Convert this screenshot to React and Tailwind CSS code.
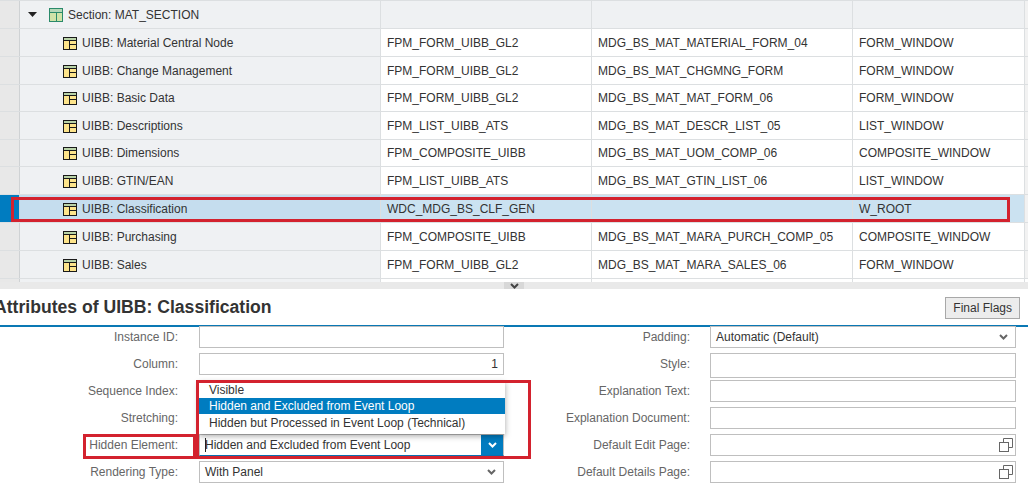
import React from 'react';

const rows = [
  { name: 'UIBB: Material Central Node', comp: 'FPM_FORM_UIBB_GL2', config: 'MDG_BS_MAT_MATERIAL_FORM_04', win: 'FORM_WINDOW', h: 'h-[28px]' },
  { name: 'UIBB: Change Management', comp: 'FPM_FORM_UIBB_GL2', config: 'MDG_BS_MAT_CHGMNG_FORM', win: 'FORM_WINDOW', h: 'h-[28px]' },
  { name: 'UIBB: Basic Data', comp: 'FPM_FORM_UIBB_GL2', config: 'MDG_BS_MAT_MAT_FORM_06', win: 'FORM_WINDOW', h: 'h-[27px]' },
  { name: 'UIBB: Descriptions', comp: 'FPM_LIST_UIBB_ATS', config: 'MDG_BS_MAT_DESCR_LIST_05', win: 'LIST_WINDOW', h: 'h-[28px]' },
  { name: 'UIBB: Dimensions', comp: 'FPM_COMPOSITE_UIBB', config: 'MDG_BS_MAT_UOM_COMP_06', win: 'COMPOSITE_WINDOW', h: 'h-[27px]' },
  { name: 'UIBB: GTIN/EAN', comp: 'FPM_LIST_UIBB_ATS', config: 'MDG_BS_MAT_GTIN_LIST_06', win: 'LIST_WINDOW', h: 'h-[28px]' },
  { name: 'UIBB: Classification', comp: 'WDC_MDG_BS_CLF_GEN', config: '', win: 'W_ROOT', h: 'h-[28px]', selected: true },
  { name: 'UIBB: Purchasing', comp: 'FPM_COMPOSITE_UIBB', config: 'MDG_BS_MAT_MARA_PURCH_COMP_05', win: 'COMPOSITE_WINDOW', h: 'h-[28px]' },
  { name: 'UIBB: Sales', comp: 'FPM_FORM_UIBB_GL2', config: 'MDG_BS_MAT_MARA_SALES_06', win: 'FORM_WINDOW', h: 'h-[28px]' },
];

const UibbIcon = () => (
  <svg width="14" height="14" viewBox="0 0 14 14" className="shrink-0">
    <rect x="0.5" y="1.5" width="13" height="12" fill="#fde48b" stroke="#1a1a1a" />
    <rect x="1" y="2" width="12" height="2" fill="#b9d3a8" />
    <path d="M1 4.5H13M6.5 4.5V13M6.5 8.5H13" stroke="#1a1a1a" fill="none" />
  </svg>
);

const SectionIcon = () => (
  <svg width="14" height="14" viewBox="0 0 14 14" className="shrink-0">
    <rect x="0.5" y="0.5" width="13" height="13" fill="#cfe3a8" stroke="#2a8a6a" />
    <rect x="1" y="1" width="12" height="3" fill="#b5d8b8" />
    <path d="M1 4.5H13M7.5 4.5V13" stroke="#2a8a6a" fill="none" />
  </svg>
);

const Chevron = ({ color = '#666' }) => (
  <svg width="9" height="6" viewBox="0 0 9 6">
    <path d="M1 1L4.5 4.5L8 1" fill="none" stroke={color} strokeWidth="2" />
  </svg>
);

const PopupIcon = () => (
  <svg width="14" height="14" viewBox="0 0 14 14" className="shrink-0">
    <path d="M4.5 4V0.5H13.5V9.5H10" fill="none" stroke="#666" />
    <rect x="0.5" y="4.5" width="9" height="9" fill="none" stroke="#666" />
  </svg>
);

const Row = ({ row }) => {
  const cell = row.selected ? 'bg-[#cbe2f1]' : 'bg-white';
  return (
    <div className={`flex ${row.h} border-b border-[#dcdfe1]`}>
      <div className={`w-[20px] shrink-0 border-r border-[#cfd2d4] ${row.selected ? 'bg-[#007cc0]' : 'bg-[#e8e8e8]'}`} />
      <div className={`w-[361px] shrink-0 flex items-center pl-[43px] gap-[5px] border-r border-[#dcdfe1] ${row.selected ? 'bg-[#c5ddee]' : 'bg-[#eff1f3]'}`}>
        <UibbIcon />
        <span>{row.name}</span>
      </div>
      <div className={`w-[211px] shrink-0 flex items-center pl-[6px] border-r border-[#dcdfe1] ${cell}`}>{row.comp}</div>
      <div className={`w-[261px] shrink-0 flex items-center pl-[6px] border-r border-[#dcdfe1] ${cell}`}>{row.config}</div>
      <div className={`w-[172px] shrink-0 flex items-center pl-[6px] border-r border-[#dcdfe1] ${cell}`}>{row.win}</div>
      <div className="flex-1 bg-[#f2f2f2]" />
    </div>
  );
};

const Field = ({ label, select, active, children }) => (
  <div className="flex items-center mb-[5px]">
    <div className="w-[178px] shrink-0 text-right text-[#666]">{label}</div>
    <div className={`relative ml-[21px] w-[305px] h-[22px] flex items-center justify-between bg-white border pl-[5px] pr-[4px] ${active ? 'border-[#c0c0c0] border-b-[#0a6fb0]' : 'border-[#bfbfbf]'}`}>
      {active && <span className="absolute left-[5px] top-[3px] bottom-[3px] w-px bg-[#222]" />}
      <span>{children}</span>
      {select && !active && <span className="mr-[3px] flex"><Chevron /></span>}
      {active && (
        <span className="absolute right-0 top-0 bottom-0 w-[22px] bg-[#007cc0] flex items-center justify-center"><Chevron color="#fff" /></span>
      )}
    </div>
  </div>
);

const FieldRight = ({ label, tall, select, popup, children }) => (
  <div className={`flex items-center ${tall ? 'mb-[2px]' : 'mb-[5px]'}`}>
    <div className={`w-[178px] shrink-0 text-right text-[#666] ${tall ? 'pb-[4px]' : ''}`}>{label}</div>
    <div className={`ml-[20px] w-[306px] ${tall ? 'h-[25px]' : 'h-[22px]'} flex items-center justify-between bg-white border border-[#bfbfbf] pl-[5px] pr-[2px]`}>
      <span>{children}</span>
      {select && <span className="mr-[5px] flex"><Chevron /></span>}
      {popup && <PopupIcon />}
    </div>
  </div>
);

const App = () => (
  <div className="relative w-[1028px] h-[488px] overflow-hidden bg-white font-['Liberation_Sans',Arial,sans-serif] text-[12px] text-[#333]">
    {/* Structure table */}
    <div className="flex h-[29px] border-t border-t-[#dcdfe1] border-b border-[#dcdfe1]">
      <div className="w-[20px] shrink-0 bg-[#e8e8e8] border-r border-[#cfd2d4]" />
      <div className="w-[361px] shrink-0 flex items-center pl-[8px] bg-[#eff1f3] border-r border-[#dcdfe1]">
        <svg width="9" height="5" viewBox="0 0 9 5" className="mr-[12px]"><path d="M0 0H9L4.5 5Z" fill="#222" /></svg>
        <SectionIcon />
        <span className="ml-[5px]">Section: MAT_SECTION</span>
      </div>
      <div className="w-[211px] shrink-0 bg-[#eff1f3] border-r border-[#dcdfe1]" />
      <div className="w-[261px] shrink-0 bg-[#eff1f3] border-r border-[#dcdfe1]" />
      <div className="w-[172px] shrink-0 bg-[#eff1f3] border-r border-[#dcdfe1]" />
      <div className="flex-1 bg-[#f2f2f2]" />
    </div>
    {rows.map((row) => <Row key={row.name} row={row} />)}

    {/* Cut off next row above the splitter */}
    <div className="flex h-[3px]">
      <div className="w-[20px] shrink-0 bg-[#e8e8e8] border-r border-[#cfd2d4]" />
      <div className="w-[361px] shrink-0 bg-[#eff1f3] border-r border-[#dcdfe1]" />
      <div className="w-[211px] shrink-0 border-r border-[#dcdfe1]" />
      <div className="w-[261px] shrink-0 border-r border-[#dcdfe1]" />
      <div className="w-[172px] shrink-0 border-r border-[#dcdfe1]" />
    </div>

    {/* Splitter */}
    <div className="h-[7px] bg-[#e9e9e9] flex justify-center">
      <div className="w-[20px] bg-[#d8d8d8] flex items-center justify-center"><Chevron color="#444" /></div>
    </div>

    {/* Attributes panel header */}
    <div className="flex items-center justify-between h-[38px] border-b-2 border-[#0a78b4] pr-[8px]">
      <h2 className="ml-[-6px] text-[17.6px] font-bold text-[#333]">Attributes of UIBB: Classification</h2>
      <button className="mt-[1px] h-[22px] px-[7px] bg-[#ececec] border border-[#a8a8a8] text-[12px] text-[#333]">Final Flags</button>
    </div>

    {/* Form */}
    <div className="flex">
      <div className="w-[512px] shrink-0 -mt-px">
        <Field label="Instance ID:"> </Field>
        <Field label="Column:"><span className="block w-[293px] text-right">1</span></Field>
        <Field label="Sequence Index:"> </Field>
        <Field label="Stretching:"> </Field>
        <Field label="Hidden Element:" select active>Hidden and Excluded from Event Loop</Field>
        <Field label="Rendering Type:" select>With Panel</Field>
      </div>
      <div className="flex-1 -mt-px">
        <FieldRight label="Padding:" select>Automatic (Default)</FieldRight>
        <FieldRight label="Style:" tall> </FieldRight>
        <FieldRight label="Explanation Text:"> </FieldRight>
        <FieldRight label="Explanation Document:"> </FieldRight>
        <FieldRight label="Default Edit Page:" popup> </FieldRight>
        <FieldRight label="Default Details Page:" popup> </FieldRight>
      </div>
    </div>

    {/* Open dropdown list */}
    <div className="absolute left-[199px] top-[381px] w-[306px] h-[53px] bg-white shadow-[0_2px_6px_rgba(0,0,0,0.35)] flex flex-col">
      <div className="h-[17px] pl-[10px] flex items-center">Visible</div>
      <div className="h-[16px] pl-[10px] flex items-center bg-[#007cc0] text-white">Hidden and Excluded from Event Loop</div>
      <div className="h-[18px] pl-[10px] flex items-center">Hidden but Processed in Event Loop (Technical)</div>
    </div>

    {/* Red annotation frames */}
    <div className="absolute left-[11px] top-[197px] w-[999px] h-[25px] border-[3px] border-[#d3222e]" />
    <div className="absolute left-[196px] top-[380px] w-[335px] h-[79px] border-[3px] border-[#d3222e]" />
    <div className="absolute left-[83px] top-[434px] w-[113px] h-[25px] border-[3px] border-[#d3222e]" />
  </div>
);

export default App;
